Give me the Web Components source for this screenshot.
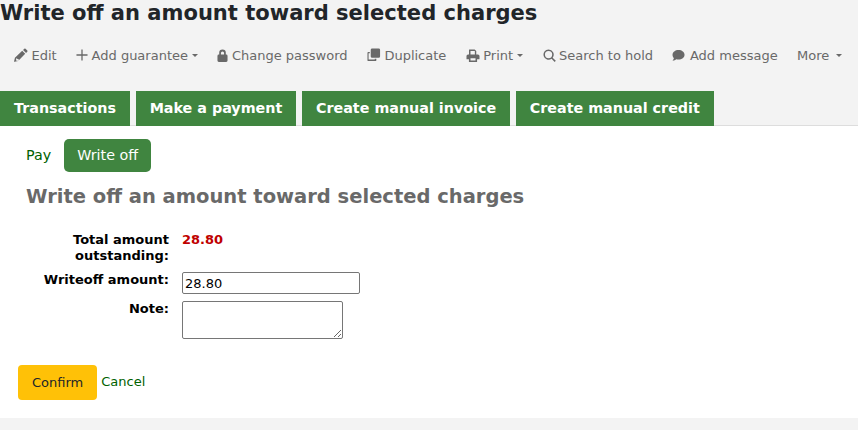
<!DOCTYPE html>
<html>
<head>
<meta charset="utf-8">
<title>Write off</title>
<style>
html, body { margin: 0; padding: 0; background: #f3f3f3; }
body { font-family: "DejaVu Sans", sans-serif; font-size: 13px; width: 858px; height: 430px; overflow: hidden; }
</style>
</head>
<body>
<patron-toolbar heading="Write off an amount toward selected charges"></patron-toolbar>
<tab-bar></tab-bar>
<writeoff-panel></writeoff-panel>

<script>
// [width, height, glyph]
const ICONS = {
    edit: [14, 14, '<path d="M11 .8a1 1 0 0 1 1.400 0l1.800 1.800a1 1 0 0 1 0 1.400l-1.300 1.300-3.200-3.200zM8.800 3l3.200 3.200-7.600 7.600-3.700.9a.5.5 0 0 1-.6-.6l.9-3.700zM2.700 10.800l-.6 2.100 1 1 2.100-.6-.2-1.300-1.300-.2z" fill-rule="evenodd"/>'],
    plus: [12, 12, '<path d="M5.800 .5h1.400v5.300h5.300v1.400H7.200v5.300H5.800V7.200H.5V5.800h5.300z"/>'],
    lock: [11, 13, '<path fill-rule="evenodd" d="M6 .5a3.600 3.600 0 0 0-3.600 3.600V6H2A1.500 1.500 0 0 0 .5 7.500v5A1.500 1.500 0 0 0 2 14h8a1.500 1.500 0 0 0 1.500-1.500v-5A1.500 1.500 0 0 0 10 6h-.4V4.100A3.600 3.600 0 0 0 6 .5zm0 2a1.700 1.700 0 0 1 1.700 1.700V6H4.300V4.200A1.700 1.700 0 0 1 6 2.500z"/>'],
    copy: [14, 14, '<path d="M5.500.5h7A1.500 1.500 0 0 1 14 2v7a1.500 1.500 0 0 1-1.500 1.500h-7A1.500 1.500 0 0 1 4 9V2A1.500 1.500 0 0 1 5.500.5z"/><path d="M1.500 4.200H3v1.500H1.700v6.600h6.600V11.500H10v1.500a1 1 0 0 1-1 1H1.500a1 1 0 0 1-1-1V5.200a1 1 0 0 1 1-1z"/>'],
    print: [14, 13, '<path fill-rule="evenodd" d="M3.500.5h5.800L11 2.200V6H9.500V2.200H4.800V6H3.200V.8zM2.200 5.800h10.600A1.700 1.700 0 0 1 14.500 7.500V11h-2.600v3H3.100v-3H.5V7.500a1.700 1.700 0 0 1 1.700-1.700zM4.800 10v2.500h5.400V10z"/>'],
    search: [13, 13, '<path fill-rule="evenodd" d="M6 .5a5.500 5.500 0 0 1 4.400 8.800l3.400 3.400-1.200 1.200-3.400-3.400A5.500 5.500 0 1 1 6 .5zm0 1.600a3.900 3.900 0 1 0 0 7.800 3.900 3.900 0 0 0 0-7.800z"/>'],
    comment: [14, 12, '<path d="M7 1c3.600 0 6.500 2.300 6.500 5.200S10.600 11.400 7 11.400c-.9 0-1.700-.1-2.500-.4-.8.7-2.200 1.600-4 1.600.8-.8 1.400-1.800 1.500-2.800C.9 8.900.5 7.600.5 6.200.5 3.300 3.400 1 7 1z"/>']
};

class PatronToolbar extends HTMLElement {
    connectedCallback() {
        this.attachShadow({ mode: "open" });
        const items = [
            ["edit", "Edit", false],
            ["plus", "Add guarantee", true],
            ["lock", "Change password", false],
            ["copy", "Duplicate", false],
            ["print", "Print", true],
            ["search", "Search to hold", false],
            ["comment", "Add message", false],
            [null, "More", true]
        ];
        const html = items.map(([icon, label, caret]) => {
            let svg = "";
            if (icon) {
                const [w, h, glyph] = ICONS[icon];
                svg = `<svg width="${w}" height="${h}" viewBox="0 0 ${w + 1} ${h + 1}">${glyph}</svg>`;
            }
            return `<span class="btn">${svg}<span>${label}</span>${caret ? `<i class="${label === "More" ? "wide" : ""}"></i>` : ""}</span>`;
        }).join("");
        this.shadowRoot.innerHTML = `
            <style>
                :host { display: block; height: 91px; }
                h1 { margin: 0; padding-top: 0; font-size: 21.040px; line-height: 25px; font-weight: bold; color: #212529; }
                .bar { display: flex; align-items: center; gap: 19.400px; padding: 20px 0 0 14px; height: 20px; color: #696969; font-size: 13px; }
                .btn { display: inline-flex; align-items: center; white-space: nowrap; }
                svg { fill: #696969; margin-right: 3.500px; flex: none; }
                i { display: inline-block; margin-left: 4px; border: 3px solid transparent; border-top-color: #696969; border-bottom-width: 0; }
                i.wide { margin-left: 7px; }
            </style>
            <h1>${this.getAttribute("heading")}</h1>
            <div class="bar">${html}</div>
        `;
    }
}

class TabBar extends HTMLElement {
    connectedCallback() {
        this.attachShadow({ mode: "open" });
        const tabs = ["Transactions", "Make a payment", "Create manual invoice", "Create manual credit"];
        this.shadowRoot.innerHTML = `
            <style>
                :host { display: flex; gap: 5.700px; height: 34px; border-bottom: 1px solid #ddd; }
                a { background: #408540; color: #fff; font-weight: bold; font-size: 14.300px; line-height: 34px; height: 35px; padding: 0 14px; white-space: nowrap; }
            </style>
            ${tabs.map(t => `<a>${t}</a>`).join("")}
        `;
    }
}

class WriteoffPanel extends HTMLElement {
    connectedCallback() {
        this.attachShadow({ mode: "open" });
        this.shadowRoot.innerHTML = `
            <style>
                :host { display: block; background: #fff; height: 292px; color: #000; font-size: 13px; overflow: hidden; }
                nav { display: flex; align-items: center; padding: 13px 0 0 13px; font-size: 14.300px; }
                nav a { color: #006100; padding: 0 13px; line-height: 32px; height: 33px; }
                nav a.on { background: #408540; color: #fff; border-radius: 5px; }
                h2 { margin: 13px 0 0 26px; font-size: 19.500px; line-height: 24px; color: #696969; font-weight: bold; }
                form { display: grid; grid-template-columns: 169px 1fr; column-gap: 13px; margin-top: 22px; }
                label { font-weight: bold; text-align: right; line-height: 16px; padding-bottom: 2px; }
                label.first { padding: 1px 0; }
                .total { font-weight: bold; color: #c00000; line-height: 17px; }
                input, textarea { box-sizing: border-box; margin: 0; padding: 1px 2px; font: 13px "DejaVu Sans", sans-serif; border: 1px solid #767676; border-radius: 2px; background: #fff; color: #000; display: block; }
                input { width: 178px; height: 22px; }
                textarea { width: 161px; height: 38px; }
                .row { margin-top: 7px; }
                .actions { display: flex; align-items: center; padding: 26px 0 0 18px; }
                .confirm { background: #ffc107; color: #212529; border-radius: 4px; height: 35px; line-height: 35px; padding: 0 14px; }
                .cancel { color: #006100; margin-left: 4px; position: relative; top: -1px; }
            </style>
            <nav><a>Pay</a><a class="on">Write off</a></nav>
            <h2>Write off an amount toward selected charges</h2>
            <form>
                <label class="first">Total amount outstanding:</label><div class="total">28.80</div>
                <label class="row">Writeoff amount:</label><div class="row"><input value="28.80"></div>
                <label class="row">Note:</label><div class="row"><textarea></textarea></div>
            </form>
            <div class="actions"><a class="confirm">Confirm</a><a class="cancel">Cancel</a></div>
        `;
    }
}

customElements.define("patron-toolbar", PatronToolbar);
customElements.define("tab-bar", TabBar);
customElements.define("writeoff-panel", WriteoffPanel);
</script>
</body>
</html>
